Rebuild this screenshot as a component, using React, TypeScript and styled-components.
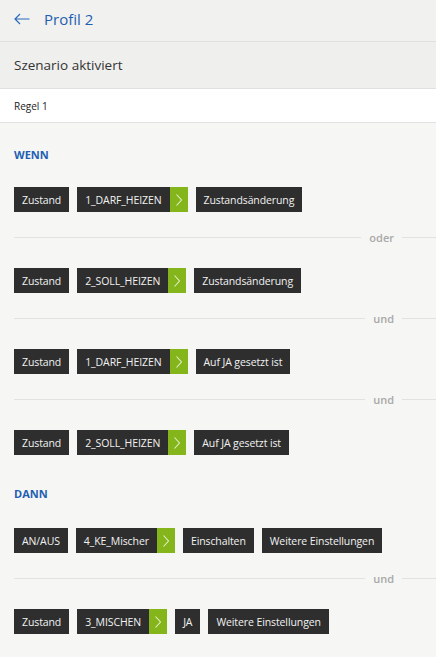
import React from 'react';
import styled, { createGlobalStyle } from 'styled-components';

type Part = { text: string; arrow?: boolean };

interface ICondition {
  parts: Part[];
  joiner?: string;
}

const wenn: ICondition[] = [
  { parts: [{ text: 'Zustand' }, { text: '1_DARF_HEIZEN', arrow: true }, { text: 'Zustandsänderung' }] },
  { joiner: 'oder', parts: [{ text: 'Zustand' }, { text: '2_SOLL_HEIZEN', arrow: true }, { text: 'Zustandsänderung' }] },
  { joiner: 'und', parts: [{ text: 'Zustand' }, { text: '1_DARF_HEIZEN', arrow: true }, { text: 'Auf JA gesetzt ist' }] },
  { joiner: 'und', parts: [{ text: 'Zustand' }, { text: '2_SOLL_HEIZEN', arrow: true }, { text: 'Auf JA gesetzt ist' }] },
];

const dann: ICondition[] = [
  {
    parts: [
      { text: 'AN/AUS' },
      { text: '4_KE_Mischer', arrow: true },
      { text: 'Einschalten' },
      { text: 'Weitere Einstellungen' },
    ],
  },
  {
    joiner: 'und',
    parts: [{ text: 'Zustand' }, { text: '3_MISCHEN', arrow: true }, { text: 'JA' }, { text: 'Weitere Einstellungen' }],
  },
];

function BackArrow() {
  return (
    <svg width="16" height="12" viewBox="0 0 16 12" fill="none">
      <path d="M15.5 6H1M6 1L1 6l5 5" stroke="#2a6bbd" strokeWidth="1.2" />
    </svg>
  );
}

function Chevron() {
  return (
    <svg width="6" height="12" viewBox="0 0 6 12" fill="none">
      <path d="M0.5 0.5L5.5 6L0.5 11.5" stroke="#e4f0c8" strokeWidth="1.1" />
    </svg>
  );
}

function ChipRow({ parts }: { parts: Part[] }) {
  return (
    <Row>
      {parts.map((p, i) => (
        <Chip key={i}>
          <ChipText>{p.text}</ChipText>
          {p.arrow && (
            <ArrowBox>
              <Chevron />
            </ArrowBox>
          )}
        </Chip>
      ))}
    </Row>
  );
}

function Block({ title, items, first }: { title: string; items: ICondition[]; first?: boolean }) {
  return (
    <Section first={first}>
      <Heading first={first}>{title}</Heading>
      {items.map((c, i) => (
        <React.Fragment key={i}>
          {c.joiner && (
            <Separator>
              <Line />
              <Joiner>{c.joiner}</Joiner>
              <TrailLine />
            </Separator>
          )}
          <ChipRow parts={c.parts} />
        </React.Fragment>
      ))}
    </Section>
  );
}

export default function App() {
  return (
    <>
      <GlobalStyle />
      <Page>
        <Header>
          <BackArrow />
          <Title>Profil 2</Title>
        </Header>
        <SubHeader>Szenario aktiviert</SubHeader>
        <RuleBar>Regel 1</RuleBar>
        <Content>
          <Block title="WENN" items={wenn} first />
          <Block title="DANN" items={dann} />
        </Content>
      </Page>
    </>
  );
}

const GlobalStyle = createGlobalStyle`
  html, body {
    margin: 0;
    padding: 0;
    background: #f6f6f4;
    font-family: "Open Sans", "Noto Sans", sans-serif;
  }
  * { box-sizing: border-box; }
`;

const Page = styled.div`
  width: 436px;
  min-height: 657px;
  background: #f6f6f4;
`;

const Header = styled.div`
  height: 42px;
  display: flex;
  align-items: center;
  gap: 14px;
  padding: 0 14px 3px;
  background: #f1f1ef;
  border-bottom: 1px solid #e0e0de;
`;

const Title = styled.span`
  font-size: 15px;
  color: #1e5fb3;
`;

const SubHeader = styled.div`
  height: 47px;
  display: flex;
  align-items: center;
  padding: 0 14px;
  font-size: 13.5px;
  color: #333;
  background: #efefed;
  border-bottom: 1px solid #e0e0de;
`;

const RuleBar = styled.div`
  height: 34px;
  display: flex;
  align-items: center;
  padding: 0 14px;
  font-size: 10px;
  color: #222;
  background: #fff;
  border-bottom: 1px solid #e2e2e0;
`;

const Content = styled.div`
  padding-left: 14px;
`;

const Section = styled.div<{ first?: boolean }>`
  padding-top: ${p => (p.first ? 25 : 32)}px;
`;

const Heading = styled.div<{ first?: boolean }>`
  font-size: 11px;
  line-height: 14px;
  font-weight: 700;
  color: #1e5fb3;
  margin-bottom: ${p => (p.first ? 25 : 27)}px;
`;

const Row = styled.div`
  display: flex;
  gap: 8px;
`;

const Chip = styled.div`
  height: 25px;
  display: flex;
  background: #2e2e2e;
`;

const ChipText = styled.span`
  display: flex;
  align-items: center;
  padding: 0 8px;
  font-size: 10.5px;
  letter-spacing: -0.1px;
  color: #f2f2f2;
  white-space: nowrap;
`;

const ArrowBox = styled.span`
  width: 18px;
  display: flex;
  align-items: center;
  justify-content: center;
  background: #84b51b;
`;

const Separator = styled.div`
  display: flex;
  align-items: center;
  height: 14px;
  margin: 18px 0 24px;
`;

const Line = styled.div`
  flex: 1;
  height: 1px;
  background: #e2e2e0;
`;

const TrailLine = styled(Line)`
  flex: 0 0 34px;
`;

const Joiner = styled.span`
  padding: 0 8px;
  font-size: 11px;
  font-weight: 600;
  color: #a9a9a9;
`;
